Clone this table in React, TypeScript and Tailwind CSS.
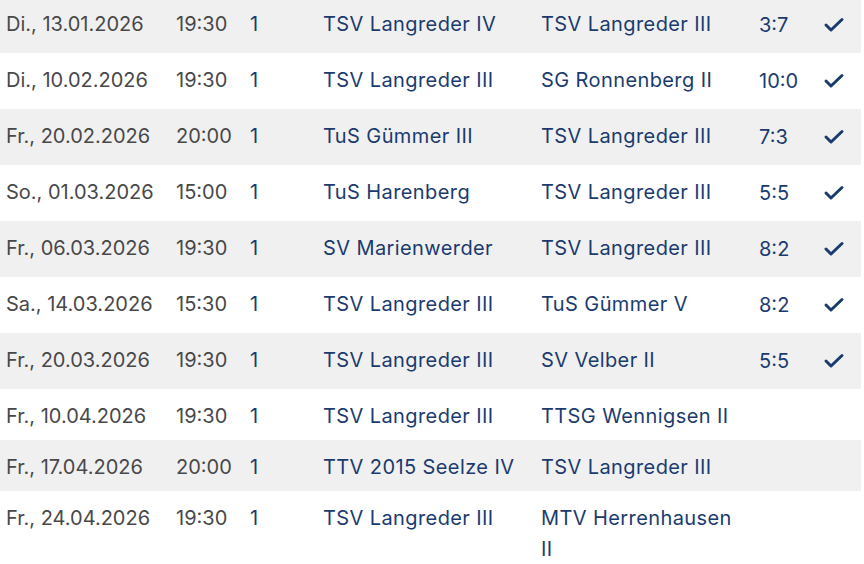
const games = [
  { date: "Di., 13.01.2026", time: "19:30", nr: "1", home: "TSV Langreder IV", guest: "TSV Langreder III", score: "3:7", done: true },
  { date: "Di., 10.02.2026", time: "19:30", nr: "1", home: "TSV Langreder III", guest: "SG Ronnenberg II", score: "10:0", done: true },
  { date: "Fr., 20.02.2026", time: "20:00", nr: "1", home: "TuS Gümmer III", guest: "TSV Langreder III", score: "7:3", done: true },
  { date: "So., 01.03.2026", time: "15:00", nr: "1", home: "TuS Harenberg", guest: "TSV Langreder III", score: "5:5", done: true },
  { date: "Fr., 06.03.2026", time: "19:30", nr: "1", home: "SV Marienwerder", guest: "TSV Langreder III", score: "8:2", done: true },
  { date: "Sa., 14.03.2026", time: "15:30", nr: "1", home: "TSV Langreder III", guest: "TuS Gümmer V", score: "8:2", done: true },
  { date: "Fr., 20.03.2026", time: "19:30", nr: "1", home: "TSV Langreder III", guest: "SV Velber II", score: "5:5", done: true },
  { date: "Fr., 10.04.2026", time: "19:30", nr: "1", home: "TSV Langreder III", guest: "TTSG Wennigsen II", score: "", done: false },
  { date: "Fr., 17.04.2026", time: "20:00", nr: "1", home: "TTV 2015 Seelze IV", guest: "TSV Langreder III", score: "", done: false },
  { date: "Fr., 24.04.2026", time: "19:30", nr: "1", home: "TSV Langreder III", guest: "MTV Herrenhausen II", score: "", done: false },
];

function CheckIcon() {
  return (
    <svg width="24" height="24" viewBox="0 0 24 24" fill="none" stroke="currentColor" strokeWidth="3" strokeLinecap="round" strokeLinejoin="round">
      <path d="M20 6.5 9 17l-5-5" />
    </svg>
  );
}

export default function App() {
  return (
    <div className="w-[864px] h-[564px] overflow-hidden bg-white" style={{ fontFamily: "Inter, 'Noto Sans', sans-serif" }}>
      <table className="mt-[-3px] w-[861px] table-fixed border-collapse text-[20px] leading-[31px]">
        <colgroup>
          <col className="w-[170px]" />
          <col className="w-[74px]" />
          <col className="w-[73px]" />
          <col className="w-[218px]" />
          <col className="w-[218px]" />
          <col className="w-[57px]" />
          <col className="w-[51px]" />
        </colgroup>
        <tbody>
          {games.map((g, i) => (
            <tr key={i} className={i % 2 === 0 ? "bg-[#f0f0f0]" : "bg-white"}>
              <td className="px-[6px] pt-[12px] pb-[8px] align-top text-[#48484a]">{g.date}</td>
              <td className="px-[6px] pt-[12px] pb-[8px] align-top text-[#48484a]">{g.time}</td>
              <td className="px-[6px] pt-[12px] pb-[8px] align-top text-[#1b3b6f]">{g.nr}</td>
              <td className="px-[6px] pt-[12px] pb-[8px] align-top tracking-[0.4px] text-[#1b3b6f]">{g.home}</td>
              <td className="pl-[6px] pr-[16px] pt-[12px] pb-[8px] align-top tracking-[0.4px] text-[#1b3b6f]">{g.guest}</td>
              <td className="px-[6px] pt-[13px] pb-[7px] align-top text-[#1b3b6f]">{g.score}</td>
              <td className="px-[6px] py-[10px] align-top">
                {g.done && (
                  <span className="flex h-9 w-9 items-center justify-center text-[#1b3b6f]">
                    <CheckIcon />
                  </span>
                )}
              </td>
            </tr>
          ))}
        </tbody>
      </table>
    </div>
  );
}
